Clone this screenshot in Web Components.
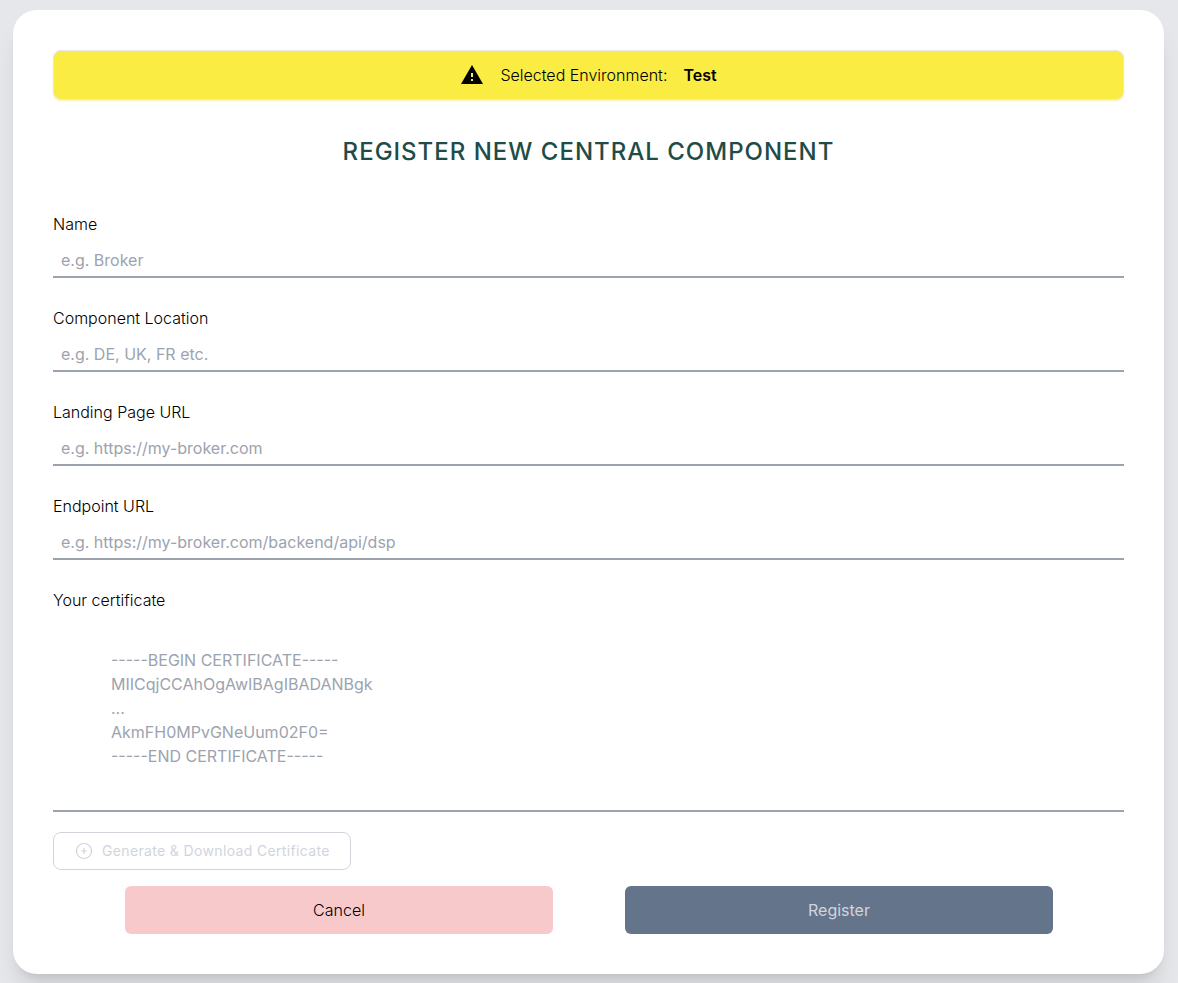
<!DOCTYPE html>
<html lang="en">
<head>
<meta charset="utf-8">
<meta name="viewport" content="width=device-width, initial-scale=1">
<title>Register new central component</title>
<style>
  body { margin: 0; background: #e5e7eb; color: #000; font: 300 16px/24px Inter, "Liberation Sans", sans-serif; }
</style>
</head>
<body>
<register-page></register-page>

<script>
const define = (name, html, setup) => {
  const template = document.createElement('template');
  template.innerHTML = '<style>*, *::before, *::after { box-sizing: border-box; }</style>' + html;
  customElements.define(name, class extends HTMLElement {
    constructor() {
      super();
      this.attachShadow({ mode: 'open' }).append(template.content.cloneNode(true));
    }
    connectedCallback() { if (setup) setup(this, this.shadowRoot); }
  });
};

define('page-card', `
  <style>
    :host { display: block; background: #fff; border-radius: 24px; padding: 40px;
      box-shadow: 0 20px 25px -5px rgba(0,0,0,.1), 0 8px 10px -6px rgba(0,0,0,.1); }
  </style>
  <slot></slot>`);

define('environment-banner', `
  <style>
    :host { display: flex; align-items: center; justify-content: center; gap: 16px; height: 50px;
      background: #faec42; border: 1px solid #e5e7eb; border-radius: 8px;
      box-shadow: 0 1px 2px rgba(250,204,21,.3); }
    svg { width: 24px; height: 24px; }
    ::slotted(strong) { font-weight: 600; }
  </style>
  <svg viewBox="0 0 24 24" aria-hidden="true"><path d="M1 21h22L12 2 1 21zm12-3h-2v-2h2v2zm0-4h-2v-4h2v4z"/></svg>
  <span>Selected Environment:</span>
  <slot></slot>`);

define('page-title', `
  <style>
    :host { display: block; }
    h1 { margin: 0; text-align: center; text-transform: uppercase; color: #1f4c47;
      font-size: 24px; font-weight: 500; line-height: 32px; letter-spacing: 1px; }
  </style>
  <h1><slot></slot></h1>`);

const fieldStyle = `
  :host { display: grid; gap: 8px; }
  input, textarea { display: block; width: 100%; margin: 0; padding: 4px 8px; border: 0; border-bottom: 2px solid #9ca3af;
    border-radius: 0; background: transparent; font: inherit; font-weight: 400; color: inherit; outline: none; resize: none; }
  input { height: 34px; }
  textarea { height: 192px; padding: 28px 58px; }
  ::placeholder { color: #9ca3af; opacity: 1; }`;

define('text-field', `
  <style>${fieldStyle}</style>
  <label for="control"><slot></slot></label>
  <input id="control" type="text">`,
  (host, root) => { root.querySelector('input').placeholder = host.getAttribute('placeholder'); });

define('certificate-field', `
  <style>${fieldStyle}</style>
  <label for="control"><slot></slot></label>
  <textarea id="control"></textarea>`,
  (host, root) => { root.querySelector('textarea').placeholder = host.getAttribute('placeholder'); });

define('generate-button', `
  <style>
    :host { display: block; }
    button { display: flex; align-items: center; gap: 8px; height: 38px; padding: 0 20px; background: #fff;
      border: 1px solid #d1d5db; border-radius: 8px; color: #d1d5db; font: inherit; font-size: 14px;
      font-weight: 400; line-height: 20px; letter-spacing: 0.025em; }
    svg { width: 20px; height: 20px; fill: none; stroke: currentColor; stroke-width: 1.2; }
  </style>
  <button type="button" disabled>
    <svg viewBox="0 0 20 20" aria-hidden="true"><circle cx="10" cy="10" r="7.5"/><path d="M10 7v6M7 10h6"/></svg>
    <slot></slot>
  </button>`);

define('action-button', `
  <style>
    :host { display: block; }
    button { display: block; width: 100%; height: 48px; padding: 0 16px; border: 0; border-radius: 6px;
      background: #f8c9cb; color: #000; font: inherit; }
    :host([primary]) button { background: #64748b; color: #d1d5db; font-weight: 400; }
  </style>
  <button type="button"><slot></slot></button>`,
  (host, root) => { root.querySelector('button').disabled = host.hasAttribute('disabled'); });

define('register-page', `
  <style>
    :host { display: block; padding: 10px 14px 9px 13px; }
    page-title { margin: 36px 0 44px; }
    form { display: block; margin: 0; }
    .fields { display: grid; gap: 28px; }
    generate-button { margin: 20px 0 16px; }
    .actions { display: grid; grid-template-columns: 1fr 1fr; gap: 72px; padding: 0 71px 0 72px; }
  </style>
  <page-card>
    <environment-banner><strong>Test</strong></environment-banner>
    <page-title>Register new central component</page-title>
    <form>
      <div class="fields">
        <text-field placeholder="e.g. Broker">Name</text-field>
        <text-field placeholder="e.g. DE, UK, FR etc.">Component Location</text-field>
        <text-field placeholder="e.g. https://my-broker.com">Landing Page URL</text-field>
        <text-field placeholder="e.g. https://my-broker.com/backend/api/dsp">Endpoint URL</text-field>
        <certificate-field placeholder="-----BEGIN CERTIFICATE-----&#10;MIICqjCCAhOgAwIBAgIBADANBgk&#10;...&#10;AkmFH0MPvGNeUum02F0=&#10;-----END CERTIFICATE-----">Your certificate</certificate-field>
      </div>
      <generate-button>Generate &amp; Download Certificate</generate-button>
      <div class="actions">
        <action-button>Cancel</action-button>
        <action-button primary disabled>Register</action-button>
      </div>
    </form>
  </page-card>`);
</script>
</body>
</html>
